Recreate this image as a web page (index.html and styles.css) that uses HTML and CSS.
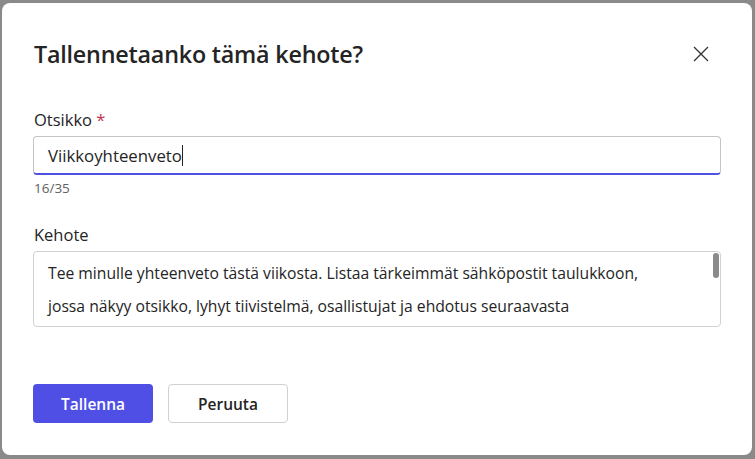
FILE: index.html
```html
<!DOCTYPE html>
<html lang="fi">
<head>
<meta charset="utf-8">
<link rel="stylesheet" href="styles.css">
</head>
<body>
<div class="dialog">
  <div class="header">
    <h1 class="title">Tallennetaanko tämä kehote?</h1>
    <button class="close" aria-label="Sulje">
      <svg width="16" height="16" viewBox="0 0 16 16"><path d="M1 1 L15 15 M15 1 L1 15" stroke="#333" stroke-width="1.3" fill="none"/></svg>
    </button>
  </div>
  <div class="field">
    <label class="label">Otsikko <span class="req">*</span></label>
    <div class="input">Viikkoyhteenveto<span class="caret"></span></div>
    <div class="counter">16/35</div>
  </div>
  <div class="field field-prompt">
    <label class="label">Kehote</label>
    <div class="textarea">
      <div class="ta-text">Tee minulle yhteenveto tästä viikosta. Listaa tärkeimmät sähköpostit taulukkoon,<br>jossa näkyy otsikko, lyhyt tiivistelmä, osallistujat ja ehdotus seuraavasta</div>
      <div class="thumb"></div>
    </div>
  </div>
  <div class="actions">
    <button class="btn btn-primary">Tallenna</button>
    <button class="btn btn-secondary">Peruuta</button>
  </div>
</div>
</body>
</html>
```
FILE: styles.css
```css
html, body {
  margin: 0;
  padding: 0;
  background: #8a8a8a;
  width: 755px;
  height: 459px;
  overflow: hidden;
}
body {
  font-family: "Open Sans", "Noto Sans", sans-serif;
  color: #242424;
  padding: 3px 3px 0 2px;
  box-sizing: border-box;
}
.dialog {
  background: #fff;
  width: 750px;
  height: 452px;
  border-radius: 8px;
  box-sizing: border-box;
  padding: 33px 37px 0 31px;
}
.header {
  display: flex;
  justify-content: space-between;
  align-items: center;
  height: 36px;
}
.title {
  margin: 0 0 0 1px;
  font-size: 23.3px;
  font-weight: 600;
  letter-spacing: -0.2px;
  color: #242424;
}
.close {
  background: none;
  border: 0;
  padding: 0;
  width: 16px;
  height: 16px;
  margin-right: 6px;
  display: flex;
}
.field {
  margin-top: 38px;
  display: flex;
  flex-direction: column;
}
.field-prompt {
  margin-top: 28px;
}
.label {
  font-size: 16.5px;
  color: #242424;
  line-height: 20px;
  height: 20px;
  margin-bottom: 6px;
  margin-left: 1px;
}
.req {
  color: #c4314b;
}
.input {
  height: 39px;
  border: 1px solid #c4c4c4;
  border-bottom: 2px solid #4f52e0;
  border-radius: 4px;
  box-sizing: border-box;
  padding: 0 14px;
  display: flex;
  align-items: center;
  font-size: 16.8px;
  width: 688px;
}
.caret {
  display: inline-block;
  width: 1px;
  height: 21px;
  background: #242424;
}
.counter {
  font-size: 13.5px;
  color: #616161;
  margin-top: 4px;
  line-height: 18px;
  margin-left: 1px;
}
.textarea {
  position: relative;
  width: 688px;
  height: 76px;
  border: 1px solid #d1d1d1;
  border-radius: 4px;
  box-sizing: border-box;
  overflow: hidden;
  padding: 5px 14px 0 14px;
}
.ta-text {
  font-size: 15.7px;
  line-height: 33px;
  color: #242424;
  white-space: nowrap;
}
.thumb {
  position: absolute;
  right: 1px;
  top: 1px;
  width: 6px;
  height: 25px;
  border-radius: 3px;
  background: #8a8a8a;
}
.actions {
  display: flex;
  gap: 15px;
  margin-top: 57px;
}
.btn {
  width: 120px;
  height: 39px;
  border-radius: 4px;
  font-family: "Open Sans", "Noto Sans", sans-serif;
  font-size: 15.5px;
  font-weight: 600;
  box-sizing: border-box;
}
.btn-primary {
  background: #4f4fe6;
  color: #fff;
  border: 0;
}
.btn-secondary {
  background: #fff;
  color: #242424;
  border: 1px solid #d1d1d1;
}
```
